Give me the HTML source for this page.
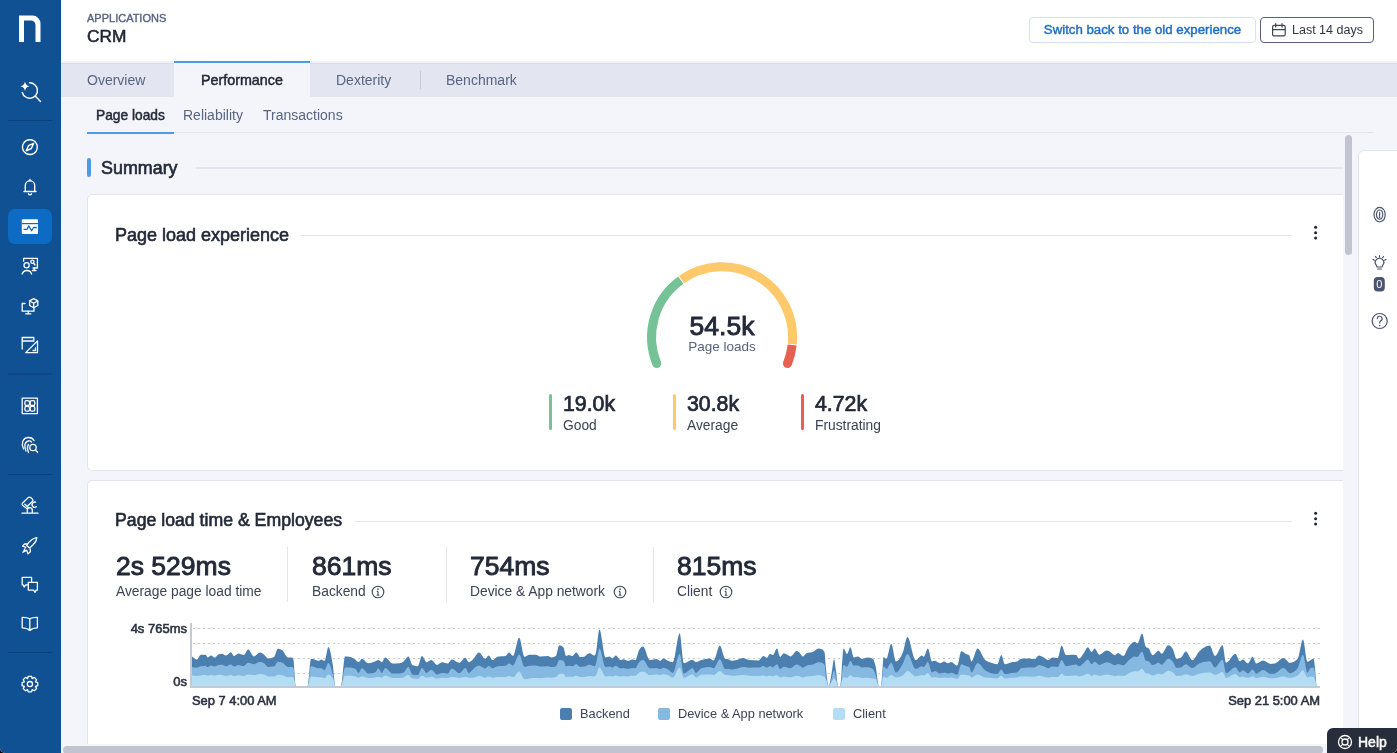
<!DOCTYPE html>
<html><head><meta charset="utf-8">
<style>
*{box-sizing:border-box;margin:0;padding:0}
html,body{width:1397px;height:753px;overflow:hidden;background:#000;font-family:"Liberation Sans",sans-serif;color:#222938}
.abs{position:absolute;white-space:nowrap}
#side{position:absolute;left:0;top:0;width:61px;height:753px;background:#105194}
#hdr{position:absolute;left:61px;top:0;width:1336px;height:62px;background:#fff}
#tabs{position:absolute;left:61px;top:63px;width:1336px;height:34px;background:#e3e6f0;box-shadow:0 -2px 0 #f1f2f7;border-top:1px solid #d9dce8}
.tab{position:absolute;top:-1px;height:34px;line-height:35px;font-size:14px;color:#586482}
.card{position:absolute;background:#fff;border:1px solid #e1e3ee;border-radius:5px}
.ttl{position:absolute;font-size:18px;font-weight:normal;-webkit-text-stroke:0.034em currentColor;color:#222938;white-space:nowrap}
.hline{position:absolute;height:1px;background:#e3e5ef}
.big{position:absolute;font-size:26.5px;font-weight:normal;-webkit-text-stroke:0.034em currentColor;color:#222938;white-space:nowrap}
.lbl{position:absolute;font-size:13.8px;color:#3a4357;white-space:nowrap;margin-top:1px}
.vdiv{position:absolute;width:1px;background:#e3e5ef}
</style></head><body><div style="position:absolute;left:0;top:0;width:1397px;height:753px;will-change:transform;background:#f4f5fa;border-radius:0 0 5px 5px;overflow:hidden">
<div id="side">
<svg width="61" height="753" viewBox="0 0 61 753" style="position:absolute;left:0;top:0">
 <path fill="#fff" d="M19,42 V15.6 H32.5 A8,8 0 0 1 40.5,23.6 V42 H35.5 V25 A4.6,4.6 0 0 0 30.9,20.4 H24 V42 Z"/>
 <g fill="none" stroke="#fff" stroke-width="1.4" stroke-linecap="round">
  <path d="M29.5,82.8 A7.7,7.7 0 1 1 22.3,92.5"/>
  <path d="M35.6,96.4 L40.5,101.5"/>
 </g>
 <path fill="#fff" d="M25,81.5 Q25.6,85.7 29.6,86.3 Q25.6,86.9 25,91.1 Q24.4,86.9 20.4,86.3 Q24.4,85.7 25,81.5 Z"/>
 <rect x="8" y="120" width="44" height="1" fill="#0c3f78"/>
 <g fill="none" stroke="#fff" stroke-width="1.4" stroke-linecap="round" stroke-linejoin="round">
  <circle cx="29.9" cy="147.1" r="7.4" stroke-dasharray="3.2 0.7"/>
  <path d="M26.2,150.8 L28.5,145.7 L33.6,143.4 L31.3,148.5 Z"/>
  <path d="M24,191.5 H36 M25.3,191.5 V185.5 A4.6,4.6 0 0 1 34.7,185.5 V191.5 M30,179.5 V180.7 M28.5,193.8 A1.6,1.6 0 0 0 31.5,193.8"/>
 </g>
 <rect x="8" y="209" width="44" height="35" rx="7" fill="#0d6bc4"/>
 <rect x="21.8" y="219.3" width="16.2" height="14.8" rx="1" fill="#fff"/>
 <rect x="21.8" y="223" width="16.2" height="1.2" fill="#0d6bc4"/>
 <path d="M23.5,229.4 L27,229.4 L28.8,225.9 L31.5,230.7 L33.6,227.5 L36.8,227.5" fill="none" stroke="#0d6bc4" stroke-width="1.3" stroke-linejoin="round"/>
 <g fill="none" stroke="#fff" stroke-width="1.3" stroke-linecap="round" stroke-linejoin="round">
  <path d="M23.6,261 V258.3 H37.4 V268 H33"/>
  <circle cx="26.6" cy="265.2" r="2.6"/>
  <path d="M22.2,274 A4.9,4.9 0 0 1 31.6,274"/>
  <circle cx="32.4" cy="261.8" r="1.6"/>
  <path d="M33.5,263 L35,265"/>
  <path d="M32.5,270.5 H36 M34.2,268 V270.5"/>
  <path d="M25,303.5 H22.2 V311.2 H34 V308.5"/>
  <path d="M28.2,311.4 V313.6 M25.6,313.8 H30.8"/>
  <path d="M33.7,298.6 L37.8,300.9 V305.5 L33.7,307.8 L29.6,305.5 V300.9 Z"/>
  <path d="M29.8,301 L33.7,303.2 L37.6,301 M33.7,303.2 V307.6"/>
  <path d="M22.2,349 V337.5 H33.8 V340.5 M22.2,341 H33.8"/>
  <path d="M37.5,340.9 V352.6 H25.7 Z"/>
  <path d="M33,350.5 H35.5 V348"/>
 </g>
 <rect x="8" y="373.5" width="44" height="1" fill="#0c3f78"/>
 <g fill="none" stroke="#fff" stroke-width="1.3" stroke-linecap="round" stroke-linejoin="round">
  <rect x="22.2" y="398.2" width="15.2" height="15.4"/>
  <rect x="24.9" y="400.7" width="4.6" height="4.8" rx="1.6"/>
  <rect x="30.2" y="400.7" width="4.6" height="4.8" rx="1.6"/>
  <rect x="24.9" y="406.3" width="4.6" height="4.8" rx="1.6"/>
  <rect x="30.2" y="406.3" width="4.6" height="4.8" rx="1.6"/>
  <path d="M23.5,449 C21,444 22.5,438 28,437.5 C31,437.3 33,438.5 34,440.5"/>
  <path d="M26,451 C24,447 24.5,442 28,441 C30,440.6 31,441.2 31.5,442"/>
  <path d="M28.5,452.5 C27.5,450 27,446.5 28.5,444.5"/>
  <circle cx="33" cy="447.5" r="3.2"/>
  <path d="M35.4,449.9 L37.6,452.2"/>
 </g>
 <rect x="8" y="474" width="44" height="1" fill="#0c3f78"/>
 <g fill="none" stroke="#fff" stroke-width="1.3" stroke-linecap="round" stroke-linejoin="round">
  <path d="M22,513.2 H38 M27.3,513 V510.2 A2.5,2.5 0 0 1 32.3,510.2 V513"/>
  <path d="M26.8,508.6 L22.4,505.2 Q21.6,504.2 22.6,503 L28.2,497.6 Q29.6,496.6 31,497.8 L32.6,499.4 Q33.4,500.6 32.4,501.6 L27.6,506 M24.8,504.2 L28.9,508"/>
  <path d="M35.6,502.2 A2.6,2.6 0 1 0 36.4,506.6"/>
  <path d="M36.8,537.6 C33.2,537.9 30.3,540.2 26.6,545.2 L29.4,548 C34.4,544.3 36.5,541.4 36.8,537.6 Z"/>
  <path d="M27.6,544 L24.6,543.8 L22.6,546.2 L25.9,547.4 M30.2,548.8 L30.4,551.8 L28,553.8 L26.8,550.5 M25,548.8 L22.9,552.3 L26.5,550.4"/>
  <path d="M31.6,581.4 V577.4 H22.2 V584.9 H23.4 L24.1,587 L25.8,584.9 H28.3"/>
  <path d="M28.3,582.3 H37.4 V590.1 H36.2 L35.1,592.3 L33.5,590.1 H28.3 Z"/>
  <path d="M29.8,618.8 C27.6,617.5 24.8,617.2 22.2,617.3 V627.8 C24.8,627.8 27.6,628.4 29.8,630.4 C32,628.4 34.8,627.8 37.4,627.8 V617.3 C34.8,617.2 32,617.5 29.8,618.8 Z M29.8,618.8 V630.2"/>
 </g>
 <rect x="8" y="652" width="44" height="1" fill="#0c3f78"/>
 <g fill="none" stroke="#fff" stroke-width="1.3" stroke-linejoin="round">
  <path d="M28.3,676.3 H31.5 L32.2,678.6 L34.3,677.4 L36.6,679.7 L35.4,681.8 L37.7,682.5 V685.7 L35.4,686.4 L36.6,688.5 L34.3,690.8 L32.2,689.6 L31.5,691.9 H28.3 L27.6,689.6 L25.5,690.8 L23.2,688.5 L24.4,686.4 L22.1,685.7 V682.5 L24.4,681.8 L23.2,679.7 L25.5,677.4 L27.6,678.6 Z"/>
  <circle cx="29.9" cy="684.1" r="2.6"/>
 </g>
</svg>
</div>
<div id="hdr">
  <div class="abs" style="left:26px;top:12px;font-size:11px;font-weight:normal;-webkit-text-stroke:0.034em currentColor;color:#56627f">APPLICATIONS</div>
  <div class="abs" style="left:26px;top:26px;font-size:17.3px;font-weight:normal;-webkit-text-stroke:0.034em currentColor;color:#1f2533">CRM</div>
  <div class="abs" style="left:968px;top:17px;width:227px;height:26px;border:1px solid #d3e3f6;border-radius:4px;font-size:13.25px;font-weight:normal;-webkit-text-stroke:0.034em currentColor;color:#1f6fc5;line-height:24px;text-align:center">Switch back to the old experience</div>
  <div class="abs" style="left:1199px;top:17px;width:114px;height:26px;border:1px solid #56627f;border-radius:4px;font-size:12.5px;color:#2c3345;line-height:24px;padding-left:31px">Last 14 days
   <svg width="16" height="16" viewBox="0 0 16 16" style="position:absolute;left:10px;top:3.5px"><g fill="none" stroke="#3a4357" stroke-width="1.2"><rect x="1.6" y="3.4" width="12.6" height="10.5" rx="1.5"/><path d="M1.6,7.6 H14.2 M4.7,1.3 V5.6 M11.1,1.3 V5.6"/></g></svg>
  </div>
</div>
<div id="tabs">
  <div class="tab" style="left:26px">Overview</div>
  <div class="abs" style="left:113px;top:-3px;width:136px;height:37px;background:#f4f5fa;border-top:2px solid #4a9be8"></div>
  <div class="tab" style="left:140px;font-weight:normal;-webkit-text-stroke:0.034em currentColor;font-size:14.3px;color:#222938">Performance</div>
  <div class="tab" style="left:275px">Dexterity</div>
  <div class="abs" style="left:359px;top:7px;width:1px;height:18px;background:#c5cad8"></div>
  <div class="tab" style="left:385px">Benchmark</div>
</div>
<!-- subtabs -->
<div class="abs" style="left:96px;top:108px;font-size:13.75px;font-weight:normal;-webkit-text-stroke:0.034em currentColor;color:#222938">Page loads</div>
<div class="abs" style="left:183px;top:107px;font-size:14px;color:#586482">Reliability</div>
<div class="abs" style="left:263px;top:107px;font-size:14px;color:#586482">Transactions</div>
<div class="hline" style="left:87px;top:132px;width:1286px"></div>
<div class="abs" style="left:87px;top:132px;width:87px;height:2px;background:#4a9be8"></div>

<div id="scroll" style="position:absolute;left:62px;top:134px;width:1281px;height:610px;overflow:hidden">
 <div style="position:absolute;left:-62px;top:-134px;width:1397px;height:900px">
  <!-- summary -->
  <div class="abs" style="left:87px;top:158px;width:4px;height:19px;background:#4a9be8;border-radius:2px"></div>
  <div class="abs" style="left:101px;top:158px;font-size:17.9px;font-weight:normal;-webkit-text-stroke:0.034em currentColor;color:#222938">Summary</div>
  <div class="abs" style="left:196px;top:167px;width:1150px;height:2px;background:#e3e5ef"></div>

  <!-- card1 -->
  <div class="card" style="left:87px;top:194px;width:1270px;height:277px"></div>
  <div class="ttl" style="left:115px;top:225px">Page load experience</div>
  <div class="hline" style="left:301px;top:235px;width:991px"></div>
  <svg class="abs" style="left:1312px;top:225px" width="8" height="16"><g fill="#1f2533"><circle cx="3.6" cy="2.2" r="1.5"/><circle cx="3.6" cy="7.7" r="1.5"/><circle cx="3.6" cy="13" r="1.5"/></g></svg>
  <!-- gauge -->
  <svg class="abs" style="left:600px;top:240px" width="250" height="150" viewBox="600 240 250 150">
   <g fill="none" stroke-width="9" stroke-linecap="butt">
    <path stroke="#74c296" d="M656.73,363.61 A70.5,70.5 0 0 1 680.76,280.09"/>
<path stroke="#fdc96a" d="M681.56,279.52 A70.5,70.5 0 0 1 792.26,344.08"/>
<path stroke="#e8604f" d="M792.16,345.06 A70.5,70.5 0 0 1 787.47,363.61"/>
<circle cx="656.73" cy="363.61" r="4.5" fill="#74c296" stroke="none"/>
<circle cx="787.47" cy="363.61" r="4.5" fill="#e8604f" stroke="none"/>
   </g>
  </svg>
  <div class="abs" style="left:622px;top:311px;width:200px;text-align:center;font-size:26.5px;font-weight:normal;-webkit-text-stroke:0.034em currentColor;color:#222938">54.5k</div>
  <div class="abs" style="left:622px;top:339px;width:200px;text-align:center;font-size:13.5px;color:#56627f">Page loads</div>
  <div class="abs" style="left:549px;top:394px;width:3px;height:36px;background:#74c296;border-radius:2px"></div>
  <div class="abs" style="left:673px;top:394px;width:3px;height:36px;background:#fdc96a;border-radius:2px"></div>
  <div class="abs" style="left:801px;top:394px;width:3px;height:36px;background:#e8604f;border-radius:2px"></div>
  <div class="big" style="left:563px;top:392px;font-size:21.3px">19.0k</div>
  <div class="lbl" style="left:563px;top:417px">Good</div>
  <div class="big" style="left:687px;top:392px;font-size:21.3px">30.8k</div>
  <div class="lbl" style="left:687px;top:417px">Average</div>
  <div class="big" style="left:815px;top:392px;font-size:21.3px">4.72k</div>
  <div class="lbl" style="left:815px;top:417px">Frustrating</div>

  <!-- card2 -->
  <div class="card" style="left:87px;top:480px;width:1270px;height:320px"></div>
  <div class="ttl" style="left:115px;top:510px;font-size:17.7px">Page load time &amp; Employees</div>
  <div class="hline" style="left:355px;top:521px;width:937px"></div>
  <svg class="abs" style="left:1312px;top:511px" width="8" height="16"><g fill="#1f2533"><circle cx="3.6" cy="2.2" r="1.5"/><circle cx="3.6" cy="7.7" r="1.5"/><circle cx="3.6" cy="13" r="1.5"/></g></svg>
  <div class="big" style="left:116px;top:551px">2s 529ms</div>
  <div class="lbl" style="left:116px;top:583px">Average page load time</div>
  <div class="vdiv" style="left:287px;top:547px;height:55px"></div>
  <div class="big" style="left:312px;top:551px">861ms</div>
  <div class="lbl" style="left:312px;top:583px">Backend</div>
  <div class="vdiv" style="left:446px;top:547px;height:55px"></div>
  <div class="big" style="left:470px;top:551px">754ms</div>
  <div class="lbl" style="left:470px;top:583px">Device &amp; App network</div>
  <div class="vdiv" style="left:653px;top:547px;height:55px"></div>
  <div class="big" style="left:677px;top:551px">815ms</div>
  <div class="lbl" style="left:677px;top:583px">Client</div>
  <svg class="abs" style="left:370.7px;top:585px" width="14" height="14" viewBox="0 0 14 14"><g fill="none" stroke="#3a4357" stroke-width="1.1"><circle cx="7" cy="7" r="5.8"/><path d="M7,6.4 V10 M5.7,10.2 H8.4 M5.8,6.4 H7"/></g><circle cx="7" cy="4.1" r="0.85" fill="#3a4357"/></svg>
<svg class="abs" style="left:612.7px;top:585px" width="14" height="14" viewBox="0 0 14 14"><g fill="none" stroke="#3a4357" stroke-width="1.1"><circle cx="7" cy="7" r="5.8"/><path d="M7,6.4 V10 M5.7,10.2 H8.4 M5.8,6.4 H7"/></g><circle cx="7" cy="4.1" r="0.85" fill="#3a4357"/></svg>
<svg class="abs" style="left:718.7px;top:585px" width="14" height="14" viewBox="0 0 14 14"><g fill="none" stroke="#3a4357" stroke-width="1.1"><circle cx="7" cy="7" r="5.8"/><path d="M7,6.4 V10 M5.7,10.2 H8.4 M5.8,6.4 H7"/></g><circle cx="7" cy="4.1" r="0.85" fill="#3a4357"/></svg>

  <!-- chart -->
  <svg class="abs" style="left:0;top:600px" width="1397" height="130" viewBox="0 600 1397 130">
   <g stroke="#c9cdd9" stroke-width="1" stroke-dasharray="2 3">
    <path d="M193,628.5 H1320 M193,643.5 H1320 M193,658.5 H1320 M193,673.5 H1320"/>
   </g>
   <path fill="#4b7fb0" d="M192.0,686.0 L192.0,656.4 C193.6,657.9 195.2,659.4 196.8,659.4 C198.2,659.4 199.5,654.7 200.9,654.7 C202.5,654.7 204.0,654.7 205.6,654.7 C206.3,654.7 207.0,657.4 207.7,657.4 C208.8,657.4 210.0,655.6 211.1,655.6 C212.2,655.6 213.4,657.8 214.5,657.8 C215.9,657.8 217.2,654.8 218.6,654.3 C219.7,653.9 220.9,653.7 222.0,653.7 C223.3,653.7 224.7,655.6 226.0,655.6 C227.6,655.6 229.2,652.2 230.8,652.2 C231.9,652.2 233.1,656.0 234.2,656.0 C235.6,656.0 236.9,653.6 238.3,653.6 C240.1,653.6 241.9,655.1 243.7,655.1 C245.2,655.1 246.7,649.6 248.2,649.6 C250.1,649.6 252.0,656.4 253.9,656.4 C255.9,656.4 258.0,652.6 260.0,652.6 C261.4,652.6 262.7,653.7 264.1,654.7 C265.5,655.7 266.8,658.5 268.2,658.5 C270.2,658.5 272.3,657.9 274.3,656.7 C275.4,656.0 276.6,648.8 277.7,648.8 C279.3,648.8 280.9,649.4 282.5,650.6 C284.3,652.0 286.1,657.4 287.9,657.4 C289.3,657.4 290.6,657.4 292.0,657.4 C292.5,657.4 292.9,658.1 293.4,659.4 C294.2,661.7 295.0,686.0 295.8,686.0 C299.7,686.0 303.7,686.0 307.6,686.0 C308.7,686.0 309.9,658.8 311.0,658.8 C312.4,658.8 313.7,659.3 315.1,659.7 C316.2,660.0 317.4,660.8 318.5,660.8 C319.4,660.8 320.3,659.4 321.2,659.4 C322.3,659.4 323.5,660.8 324.6,660.8 C325.9,660.8 327.1,646.9 328.4,646.9 C329.9,646.9 331.3,655.5 332.8,664.9 C333.7,670.7 334.6,686.0 335.5,686.0 C337.3,686.0 339.2,686.0 341.0,686.0 C342.3,686.0 343.7,656.4 345.0,656.4 C346.4,656.4 347.7,656.5 349.1,656.7 C351.1,657.0 353.2,658.0 355.2,659.4 C356.3,660.2 357.5,662.2 358.6,662.2 C359.7,662.2 360.9,658.8 362.0,658.8 C364.1,658.8 366.1,663.2 368.2,663.2 C370.5,663.2 372.7,662.3 375.0,661.5 C376.1,661.1 377.3,660.1 378.4,660.1 C379.5,660.1 380.7,662.2 381.8,662.2 C382.9,662.2 384.1,657.4 385.2,657.4 C387.7,657.4 390.2,663.5 392.7,663.5 C395.0,663.5 397.2,663.4 399.5,663.2 C400.9,663.1 402.2,662.5 403.6,661.5 C405.2,660.4 406.7,656.4 408.3,656.4 C409.7,656.4 411.0,664.2 412.4,664.9 C414.2,665.8 416.0,666.2 417.8,666.2 C419.2,666.2 420.5,656.0 421.9,656.0 C423.5,656.0 425.1,662.2 426.7,662.2 C428.3,662.2 429.8,660.1 431.4,660.1 C433.2,660.1 435.1,664.9 436.9,664.9 C438.7,664.9 440.5,662.2 442.3,662.2 C444.1,662.2 446.0,663.5 447.8,663.5 C449.1,663.5 450.5,659.4 451.8,659.4 C454.3,659.4 456.8,662.8 459.3,662.8 C461.3,662.8 463.4,657.8 465.4,657.8 C466.5,657.8 467.7,662.2 468.8,662.2 C470.2,662.2 471.5,660.6 472.9,659.4 C474.9,657.6 477.0,652.4 479.0,652.4 C481.1,652.4 483.1,658.8 485.2,658.8 C486.3,658.8 487.5,655.4 488.6,655.4 C489.9,655.4 491.3,660.1 492.6,660.1 C494.2,660.1 495.8,657.0 497.4,656.7 C500.1,656.2 502.9,656.5 505.6,656.0 C506.7,655.8 507.9,652.6 509.0,652.6 C510.3,652.6 511.7,656.0 513.0,656.0 C515.1,656.0 517.1,637.7 519.2,637.7 C521.0,637.7 522.8,656.7 524.6,656.7 C526.2,656.7 527.8,654.7 529.4,654.7 C531.4,654.7 533.5,654.7 535.5,654.7 C537.1,654.7 538.6,656.4 540.2,656.4 C542.7,656.4 545.2,656.0 547.7,656.0 C549.1,656.0 550.4,657.4 551.8,657.4 C553.2,657.4 554.5,656.9 555.9,656.0 C557.0,655.2 558.2,645.2 559.3,645.2 C560.7,645.2 562.0,645.9 563.4,647.2 C564.3,648.1 565.2,656.0 566.1,656.0 C567.0,656.0 567.9,655.1 568.8,655.1 C569.9,655.1 571.1,656.0 572.2,656.0 C573.6,656.0 574.9,652.4 576.3,652.4 C577.7,652.4 579.0,657.0 580.4,657.0 C581.8,657.0 583.1,656.8 584.5,656.4 C586.1,655.9 587.6,653.3 589.2,653.3 C591.0,653.3 592.9,655.6 594.7,655.6 C595.1,655.6 595.6,654.1 596.0,652.6 C597.1,648.6 598.3,629.5 599.4,629.5 C601.5,629.5 603.5,657.4 605.6,657.4 C606.9,657.4 608.3,656.4 609.6,656.4 C610.5,656.4 611.5,658.4 612.4,658.4 C613.5,658.4 614.7,655.6 615.8,655.6 C617.4,655.6 618.9,660.1 620.5,660.1 C621.4,660.1 622.3,659.2 623.2,659.2 C624.8,659.2 626.4,660.8 628.0,660.8 C629.4,660.8 630.7,659.4 632.1,659.4 C633.2,659.4 634.4,660.1 635.5,660.1 C636.6,660.1 637.8,652.8 638.9,650.6 C640.3,647.9 641.6,646.5 643.0,646.5 C645.3,646.5 647.5,660.1 649.8,660.1 C652.1,660.1 654.3,659.0 656.6,659.0 C657.7,659.0 658.9,660.8 660.0,660.8 C661.1,660.8 662.3,658.4 663.4,658.4 C664.7,658.4 666.1,659.9 667.4,660.5 C669.2,661.3 671.1,662.2 672.9,662.2 C675.2,662.2 677.4,633.6 679.7,633.6 C681.1,633.6 682.4,663.2 683.8,663.2 C686.7,663.2 689.7,659.7 692.6,659.7 C693.7,659.7 694.9,662.2 696.0,662.2 C697.8,662.2 699.6,660.7 701.4,660.1 C704.1,659.2 706.9,658.4 709.6,658.4 C711.0,658.4 712.3,660.5 713.7,660.5 C715.7,660.5 717.8,645.6 719.8,645.6 C721.6,645.6 723.4,658.2 725.2,658.8 C726.3,659.2 727.5,659.1 728.6,659.4 C729.7,659.7 730.9,660.8 732.0,660.8 C733.6,660.8 735.2,660.5 736.8,660.1 C738.8,659.6 740.9,658.1 742.9,658.1 C745.0,658.1 747.0,659.9 749.1,660.1 C752.3,660.4 755.4,660.5 758.6,660.5 C760.2,660.5 761.8,656.0 763.4,656.0 C764.5,656.0 765.7,657.8 766.8,657.8 C767.9,657.8 769.1,653.7 770.2,653.7 C771.1,653.7 772.0,655.1 772.9,655.1 C774.3,655.1 775.6,648.6 777.0,648.6 C778.0,648.6 779.1,657.0 780.1,657.0 C781.3,657.0 782.6,653.3 783.8,653.3 C786.1,653.3 788.3,656.4 790.6,656.4 C792.6,656.4 794.7,651.0 796.7,651.0 C797.6,651.0 798.5,651.7 799.4,652.4 C800.5,653.3 801.7,656.4 802.8,656.4 C804.2,656.4 805.5,653.4 806.9,653.0 C808.9,652.3 811.0,652.7 813.0,652.0 C814.8,651.4 816.6,648.6 818.4,648.6 C819.5,648.6 820.7,648.8 821.8,649.2 C822.7,649.5 823.7,650.3 824.6,652.6 C825.0,653.7 825.5,663.3 825.9,667.6 C826.8,676.6 827.7,686.0 828.6,686.0 C829.5,686.0 830.5,679.0 831.4,674.4 C832.3,670.0 833.2,659.2 834.1,659.2 C834.8,659.2 835.4,667.4 836.1,671.7 C836.8,676.3 837.5,686.0 838.2,686.0 C838.9,686.0 839.5,686.0 840.2,686.0 C841.3,686.0 842.5,648.6 843.6,648.6 C844.7,648.6 845.9,654.0 847.0,654.0 C848.1,654.0 849.3,647.2 850.4,647.2 C851.5,647.2 852.7,657.4 853.8,657.4 C855.2,657.4 856.5,656.4 857.9,656.4 C859.3,656.4 860.6,658.8 862.0,658.8 C863.8,658.8 865.6,657.4 867.4,657.4 C869.2,657.4 871.0,657.9 872.8,658.8 C873.7,659.3 874.7,662.4 875.6,666.2 C876.7,670.8 877.9,686.0 879.0,686.0 C879.7,686.0 880.3,686.0 881.0,686.0 C881.9,686.0 882.8,657.0 883.7,657.0 C884.6,657.0 885.5,658.8 886.4,658.8 C888.0,658.8 889.6,643.8 891.2,643.8 C892.8,643.8 894.4,661.5 896.0,661.5 C898.3,661.5 900.5,658.3 902.8,652.6 C904.4,648.7 905.9,637.0 907.5,637.0 C910.2,637.0 913.0,660.1 915.7,660.1 C917.7,660.1 919.8,655.4 921.8,655.4 C922.5,655.4 923.1,656.7 923.8,656.7 C925.2,656.7 926.5,648.6 927.9,648.6 C929.3,648.6 930.6,661.5 932.0,661.5 C932.9,661.5 933.9,660.8 934.8,660.8 C936.6,660.8 938.4,663.2 940.2,663.2 C941.6,663.2 942.9,661.5 944.3,661.5 C945.4,661.5 946.6,663.2 947.7,663.2 C948.8,663.2 950.0,661.9 951.1,661.9 C953.1,661.9 955.2,665.6 957.2,665.6 C958.6,665.6 959.9,651.3 961.3,651.3 C962.9,651.3 964.4,653.2 966.0,654.0 C967.1,654.6 968.3,654.5 969.4,655.6 C970.1,656.3 970.8,661.5 971.5,661.5 C973.5,661.5 975.6,648.6 977.6,648.6 C980.1,648.6 982.6,657.9 985.1,660.1 C987.1,661.9 989.2,662.1 991.2,662.8 C993.2,663.5 995.3,664.2 997.3,664.2 C998.7,664.2 1000.0,655.1 1001.4,655.1 C1002.5,655.1 1003.7,664.2 1004.8,664.2 C1007.1,664.2 1009.3,662.7 1011.6,662.2 C1013.4,661.8 1015.2,662.0 1017.0,661.5 C1018.4,661.1 1019.7,658.9 1021.1,658.8 C1023.4,658.6 1025.6,658.5 1027.9,658.5 C1030.2,658.5 1032.4,659.2 1034.7,659.2 C1036.1,659.2 1037.4,655.6 1038.8,655.6 C1040.2,655.6 1041.5,656.4 1042.9,657.0 C1044.7,657.8 1046.5,660.1 1048.3,660.1 C1049.7,660.1 1051.0,657.4 1052.4,657.4 C1054.2,657.4 1056.0,658.1 1057.8,658.1 C1059.1,658.1 1060.3,645.6 1061.6,645.6 C1063.1,645.6 1064.5,655.1 1066.0,655.1 C1067.8,655.1 1069.6,654.7 1071.4,654.7 C1073.0,654.7 1074.6,654.8 1076.2,655.1 C1077.1,655.2 1078.0,658.8 1078.9,658.8 C1080.5,658.8 1082.1,655.4 1083.7,653.3 C1085.1,651.5 1086.4,647.2 1087.8,647.2 C1089.1,647.2 1090.5,652.0 1091.8,652.0 C1092.7,652.0 1093.7,648.6 1094.6,648.6 C1096.2,648.6 1097.7,654.7 1099.3,654.7 C1101.8,654.7 1104.3,650.6 1106.8,650.6 C1108.2,650.6 1109.5,651.6 1110.9,652.4 C1112.3,653.2 1113.6,655.3 1115.0,655.3 C1116.0,655.3 1117.0,653.1 1118.0,653.1 C1119.8,653.1 1121.5,656.1 1123.3,656.1 C1125.0,656.1 1126.8,649.4 1128.5,647.1 C1130.5,644.4 1132.5,641.8 1134.5,641.8 C1135.5,641.8 1136.5,643.3 1137.5,643.3 C1139.0,643.3 1140.6,633.5 1142.1,633.5 C1143.3,633.5 1144.6,645.3 1145.8,646.8 C1146.8,648.0 1147.8,647.5 1148.8,648.6 C1150.1,650.0 1151.3,655.3 1152.6,655.3 C1154.6,655.3 1156.6,650.8 1158.6,650.8 C1159.6,650.8 1160.6,653.8 1161.6,653.8 C1163.9,653.8 1166.1,645.3 1168.4,645.3 C1169.9,645.3 1171.4,646.6 1172.9,649.3 C1174.1,651.5 1175.4,658.8 1176.6,658.8 C1178.1,658.8 1179.6,658.4 1181.1,657.6 C1182.6,656.8 1184.2,651.6 1185.7,651.6 C1187.9,651.6 1190.2,660.3 1192.4,660.3 C1194.7,660.3 1196.9,653.9 1199.2,651.6 C1202.7,648.1 1206.2,645.6 1209.7,645.6 C1211.5,645.6 1213.2,656.1 1215.0,656.1 C1217.5,656.1 1220.0,645.3 1222.5,645.3 C1223.7,645.3 1225.0,662.8 1226.2,662.8 C1229.2,662.8 1232.3,653.8 1235.3,653.8 C1236.8,653.8 1238.3,661.3 1239.8,661.3 C1240.8,661.3 1241.8,659.4 1242.8,659.4 C1244.5,659.4 1246.3,663.3 1248.0,663.3 C1249.5,663.3 1251.1,656.8 1252.6,656.8 C1253.8,656.8 1255.1,663.6 1256.3,663.6 C1258.6,663.6 1260.8,660.6 1263.1,660.6 C1265.6,660.6 1268.1,663.9 1270.6,663.9 C1271.9,663.9 1273.1,663.8 1274.4,663.6 C1277.4,663.1 1280.4,657.9 1283.4,657.9 C1285.6,657.9 1287.9,662.8 1290.1,662.8 C1292.6,662.8 1295.2,661.5 1297.7,658.8 C1299.4,657.0 1301.2,639.5 1302.9,639.5 C1304.4,639.5 1305.9,661.8 1307.4,661.8 C1308.4,661.8 1309.4,660.8 1310.4,660.3 C1311.4,659.8 1312.4,658.8 1313.4,658.8 C1314.4,658.8 1315.4,672.4 1316.4,686.0 L1316.4,686.0 Z"/>
<path fill="#86b9e2" d="M192.0,686.0 L192.0,666.9 C193.6,667.2 195.2,667.6 196.8,667.6 C198.2,667.6 199.5,666.5 200.9,666.2 C202.5,665.9 204.0,665.7 205.6,665.7 C206.3,665.7 207.0,667.1 207.7,667.1 C208.8,667.1 210.0,665.6 211.1,665.6 C212.2,665.6 213.4,666.5 214.5,666.5 C215.9,666.5 217.2,664.9 218.6,664.9 C219.7,664.8 220.9,664.8 222.0,664.8 C223.3,664.8 224.7,666.3 226.0,666.3 C227.6,666.3 229.2,664.6 230.8,664.6 C231.9,664.6 233.1,666.6 234.2,666.6 C235.6,666.6 236.9,664.9 238.3,664.9 C240.1,664.9 241.9,666.0 243.7,666.0 C245.2,666.0 246.7,662.8 248.2,662.8 C250.1,662.8 252.0,664.2 253.9,664.2 C255.9,664.2 258.0,662.0 260.0,662.0 C261.4,662.0 262.7,662.4 264.1,663.2 C265.5,664.1 266.8,666.9 268.2,666.9 C270.2,666.9 272.3,666.7 274.3,666.3 C275.4,666.0 276.6,661.7 277.7,661.7 C279.3,661.7 280.9,662.1 282.5,662.8 C284.3,663.7 286.1,666.9 287.9,666.9 C289.3,666.9 290.6,666.9 292.0,666.9 C292.5,666.9 292.9,667.3 293.4,668.0 C294.2,669.3 295.0,686.0 295.8,686.0 C299.7,686.0 303.7,686.0 307.6,686.0 C308.7,686.0 309.9,666.2 311.0,666.2 C312.4,666.2 313.7,666.9 315.1,667.2 C316.2,667.6 317.4,668.3 318.5,668.3 C319.4,668.3 320.3,668.3 321.2,668.3 C322.3,668.3 323.5,670.2 324.6,670.2 C325.9,670.2 327.1,663.1 328.4,663.1 C329.9,663.1 331.3,669.1 332.8,674.4 C333.7,677.7 334.6,686.0 335.5,686.0 C337.3,686.0 339.2,686.0 341.0,686.0 C342.3,686.0 343.7,667.6 345.0,667.6 C346.4,667.6 347.7,667.6 349.1,667.6 C351.1,667.6 353.2,668.0 355.2,668.8 C356.3,669.3 357.5,672.9 358.6,672.9 C359.7,672.9 360.9,668.2 362.0,668.2 C364.1,668.2 366.1,673.5 368.2,673.5 C370.5,673.5 372.7,673.1 375.0,672.5 C376.1,672.2 377.3,668.4 378.4,668.4 C379.5,668.4 380.7,672.9 381.8,672.9 C382.9,672.9 384.1,667.9 385.2,667.9 C387.7,667.9 390.2,673.6 392.7,673.6 C395.0,673.6 397.2,673.6 399.5,673.5 C400.9,673.4 402.2,673.1 403.6,672.5 C405.2,671.8 406.7,666.9 408.3,666.9 C409.7,666.9 411.0,674.0 412.4,674.4 C414.2,674.9 416.0,675.1 417.8,675.1 C419.2,675.1 420.5,667.9 421.9,667.9 C423.5,667.9 425.1,672.9 426.7,672.9 C428.3,672.9 429.8,669.8 431.4,669.8 C433.2,669.8 435.1,674.4 436.9,674.4 C438.7,674.4 440.5,672.9 442.3,672.9 C444.1,672.9 446.0,673.6 447.8,673.6 C449.1,673.6 450.5,668.5 451.8,668.5 C454.3,668.5 456.8,673.2 459.3,673.2 C461.3,673.2 463.4,667.9 465.4,667.9 C466.5,667.9 467.7,672.9 468.8,672.9 C470.2,672.9 471.5,670.4 472.9,669.4 C474.9,667.8 477.0,665.5 479.0,665.5 C481.1,665.5 483.1,668.5 485.2,668.5 C486.3,668.5 487.5,666.0 488.6,666.0 C489.9,666.0 491.3,668.3 492.6,668.3 C494.2,668.3 495.8,666.4 497.4,666.2 C500.1,665.9 502.9,666.0 505.6,665.7 C506.7,665.6 507.9,663.6 509.0,663.6 C510.3,663.6 511.7,665.6 513.0,665.6 C515.1,665.6 517.1,654.6 519.2,654.6 C521.0,654.6 522.8,666.9 524.6,666.9 C526.2,666.9 527.8,665.7 529.4,665.7 C531.4,665.6 533.5,665.6 535.5,665.6 C537.1,665.6 538.6,666.6 540.2,666.6 C542.7,666.6 545.2,666.3 547.7,666.3 C549.1,666.3 550.4,667.1 551.8,667.1 C553.2,667.1 554.5,666.8 555.9,666.2 C557.0,665.8 558.2,660.1 559.3,660.1 C560.7,660.1 562.0,660.3 563.4,660.7 C564.3,660.9 565.2,666.2 566.1,666.2 C567.0,666.2 567.9,665.7 568.8,665.7 C569.9,665.7 571.1,666.3 572.2,666.3 C573.6,666.3 574.9,664.2 576.3,664.2 C577.7,664.2 579.0,667.0 580.4,667.0 C581.8,667.0 583.1,666.9 584.5,666.6 C586.1,666.4 587.6,664.8 589.2,664.8 C591.0,664.8 592.9,666.2 594.7,666.2 C595.1,666.2 595.6,665.0 596.0,663.9 C597.1,660.9 598.3,648.5 599.4,648.5 C601.5,648.5 603.5,667.0 605.6,667.0 C606.9,667.0 608.3,666.4 609.6,666.4 C610.5,666.4 611.5,667.5 612.4,667.5 C613.5,667.5 614.7,665.8 615.8,665.8 C617.4,665.8 618.9,668.5 620.5,668.5 C621.4,668.5 622.3,667.9 623.2,667.9 C624.8,667.9 626.4,668.8 628.0,668.8 C629.4,668.8 630.7,667.9 632.1,667.9 C633.2,667.9 634.4,668.3 635.5,668.3 C636.6,668.3 637.8,663.9 638.9,662.6 C640.3,660.9 641.6,660.1 643.0,660.1 C645.3,660.1 647.5,668.3 649.8,668.3 C652.1,668.3 654.3,667.9 656.6,667.9 C657.7,667.9 658.9,669.1 660.0,669.1 C661.1,669.1 662.3,667.7 663.4,667.7 C664.7,667.7 666.1,668.5 667.4,669.1 C669.2,670.0 671.1,672.9 672.9,672.9 C675.2,672.9 677.4,653.9 679.7,653.9 C681.1,653.9 682.4,673.5 683.8,673.5 C686.7,673.5 689.7,668.2 692.6,668.2 C693.7,668.2 694.9,672.9 696.0,672.9 C697.8,672.9 699.6,668.8 701.4,668.3 C704.1,667.5 706.9,667.1 709.6,667.1 C711.0,667.1 712.3,668.3 713.7,668.3 C715.7,668.3 717.8,659.2 719.8,659.2 C721.6,659.2 723.4,668.9 725.2,668.9 C726.3,669.0 727.5,669.0 728.6,669.0 C729.7,669.1 730.9,669.6 732.0,669.6 C733.6,669.6 735.2,669.1 736.8,668.7 C738.8,668.3 740.9,667.0 742.9,667.0 C745.0,667.0 747.0,667.7 749.1,667.7 C752.3,667.7 755.4,667.6 758.6,667.6 C760.2,667.6 761.8,665.9 763.4,665.9 C764.5,665.9 765.7,667.6 766.8,667.6 C767.9,667.6 769.1,665.9 770.2,665.9 C771.1,665.9 772.0,667.2 772.9,667.2 C774.3,667.2 775.6,664.2 777.0,664.2 C778.0,664.2 779.1,669.0 780.1,669.0 C781.3,669.0 782.6,666.7 783.8,666.7 C786.1,666.7 788.3,668.2 790.6,668.2 C792.6,668.2 794.7,664.6 796.7,664.6 C797.6,664.6 798.5,665.0 799.4,665.4 C800.5,665.9 801.7,667.6 802.8,667.6 C804.2,667.6 805.5,665.8 806.9,665.4 C808.9,664.8 811.0,665.1 813.0,664.5 C814.8,663.9 816.6,662.2 818.4,662.2 C819.5,662.2 820.7,662.3 821.8,662.7 C822.7,663.0 823.7,663.4 824.6,664.9 C825.0,665.6 825.5,672.9 825.9,675.9 C826.8,682.1 827.7,686.0 828.6,686.0 C829.5,686.0 830.5,682.3 831.4,679.6 C832.3,677.0 833.2,670.3 834.1,670.3 C834.8,670.3 835.4,675.6 836.1,678.1 C836.8,680.8 837.5,686.0 838.2,686.0 C838.9,686.0 839.5,686.0 840.2,686.0 C841.3,686.0 842.5,664.9 843.6,664.9 C844.7,664.9 845.9,666.6 847.0,666.6 C848.1,666.6 849.3,661.0 850.4,661.0 C851.5,661.0 852.7,665.6 853.8,665.6 C855.2,665.6 856.5,665.5 857.9,665.5 C859.3,665.5 860.6,667.5 862.0,667.5 C863.8,667.5 865.6,667.3 867.4,667.3 C869.2,667.3 871.0,667.9 872.8,668.9 C873.7,669.4 874.7,672.6 875.6,675.1 C876.7,678.1 877.9,686.0 879.0,686.0 C879.7,686.0 880.3,686.0 881.0,686.0 C881.9,686.0 882.8,666.2 883.7,666.2 C884.6,666.2 885.5,668.9 886.4,668.9 C888.0,668.9 889.6,662.8 891.2,662.8 C892.8,662.8 894.4,672.5 896.0,672.5 C898.3,672.5 900.5,667.7 902.8,663.8 C904.4,661.0 905.9,654.0 907.5,654.0 C910.2,654.0 913.0,669.0 915.7,669.0 C917.7,669.0 919.8,666.2 921.8,666.2 C922.5,666.2 923.1,667.0 923.8,667.0 C925.2,667.0 926.5,662.1 927.9,662.1 C929.3,662.1 930.6,672.5 932.0,672.5 C932.9,672.5 933.9,670.9 934.8,670.9 C936.6,670.9 938.4,673.5 940.2,673.5 C941.6,673.5 942.9,672.5 944.3,672.5 C945.4,672.5 946.6,673.5 947.7,673.5 C948.8,673.5 950.0,672.7 951.1,672.7 C953.1,672.7 955.2,674.8 957.2,674.8 C958.6,674.8 959.9,664.2 961.3,664.2 C962.9,664.2 964.4,665.5 966.0,666.1 C967.1,666.6 968.3,666.5 969.4,667.3 C970.1,667.8 970.8,672.5 971.5,672.5 C973.5,672.5 975.6,663.0 977.6,663.0 C980.1,663.0 982.6,668.6 985.1,670.3 C987.1,671.8 989.2,672.7 991.2,673.2 C993.2,673.8 995.3,674.0 997.3,674.0 C998.7,674.0 1000.0,669.6 1001.4,669.6 C1002.5,669.6 1003.7,674.0 1004.8,674.0 C1007.1,674.0 1009.3,673.2 1011.6,672.9 C1013.4,672.7 1015.2,672.8 1017.0,672.5 C1018.4,672.3 1019.7,668.6 1021.1,668.3 C1023.4,667.8 1025.6,667.6 1027.9,667.5 C1030.2,667.4 1032.4,667.5 1034.7,667.4 C1036.1,667.3 1037.4,664.9 1038.8,664.9 C1040.2,664.9 1041.5,665.6 1042.9,666.0 C1044.7,666.6 1046.5,668.3 1048.3,668.3 C1049.7,668.3 1051.0,666.6 1052.4,666.6 C1054.2,666.6 1056.0,667.0 1057.8,667.0 C1059.1,667.0 1060.3,660.1 1061.6,660.1 C1063.1,660.1 1064.5,666.2 1066.0,666.2 C1067.8,666.2 1069.6,665.5 1071.4,665.3 C1073.0,665.0 1074.6,664.6 1076.2,664.6 C1077.1,664.6 1078.0,666.3 1078.9,666.3 C1080.5,666.3 1082.1,664.3 1083.7,663.0 C1085.1,661.9 1086.4,659.4 1087.8,659.4 C1089.1,659.4 1090.5,664.2 1091.8,664.2 C1092.7,664.2 1093.7,661.8 1094.6,661.8 C1096.2,661.8 1097.7,664.9 1099.3,664.9 C1101.8,664.9 1104.3,662.2 1106.8,662.2 C1108.2,662.2 1109.5,662.9 1110.9,663.4 C1112.3,663.9 1113.6,665.3 1115.0,665.3 C1116.0,665.3 1117.0,664.1 1118.0,664.1 C1119.8,664.1 1121.5,665.4 1123.3,665.4 C1125.0,665.4 1126.8,662.0 1128.5,660.6 C1130.5,659.0 1132.5,656.5 1134.5,656.5 C1135.5,656.5 1136.5,656.9 1137.5,656.9 C1139.0,656.9 1140.6,651.8 1142.1,651.8 C1143.3,651.8 1144.6,659.9 1145.8,660.6 C1146.8,661.1 1147.8,660.9 1148.8,661.4 C1150.1,662.1 1151.3,665.1 1152.6,665.1 C1154.6,665.1 1156.6,662.8 1158.6,662.8 C1159.6,662.8 1160.6,664.8 1161.6,664.8 C1163.9,664.8 1166.1,658.8 1168.4,658.8 C1169.9,658.8 1171.4,659.9 1172.9,661.7 C1174.1,663.2 1175.4,667.8 1176.6,667.8 C1178.1,667.8 1179.6,667.7 1181.1,667.5 C1182.6,667.3 1184.2,664.3 1185.7,664.3 C1187.9,664.3 1190.2,668.1 1192.4,668.1 C1194.7,668.1 1196.9,664.6 1199.2,663.6 C1202.7,662.1 1206.2,661.3 1209.7,661.3 C1211.5,661.3 1213.2,667.4 1215.0,667.4 C1217.5,667.4 1220.0,659.8 1222.5,659.8 C1223.7,659.8 1225.0,673.2 1226.2,673.2 C1229.2,673.2 1232.3,667.3 1235.3,667.3 C1236.8,667.3 1238.3,672.4 1239.8,672.4 C1240.8,672.4 1241.8,670.3 1242.8,670.3 C1244.5,670.3 1246.3,673.5 1248.0,673.5 C1249.5,673.5 1251.1,669.5 1252.6,669.5 C1253.8,669.5 1255.1,673.7 1256.3,673.7 C1258.6,673.7 1260.8,670.0 1263.1,670.0 C1265.6,670.0 1268.1,673.8 1270.6,673.8 C1271.9,673.8 1273.1,673.8 1274.4,673.7 C1277.4,673.4 1280.4,668.1 1283.4,668.1 C1285.6,668.1 1287.9,673.2 1290.1,673.2 C1292.6,673.2 1295.2,671.5 1297.7,668.1 C1299.4,665.7 1301.2,654.8 1302.9,654.8 C1304.4,654.8 1305.9,672.7 1307.4,672.7 C1308.4,672.7 1309.4,668.7 1310.4,668.2 C1311.4,667.8 1312.4,667.6 1313.4,667.6 C1314.4,667.6 1315.4,676.8 1316.4,686.0 L1316.4,686.0 Z"/>
<path fill="#b4ddf3" d="M192.0,686.0 L192.0,675.5 C193.6,675.8 195.2,676.0 196.8,676.0 C198.2,676.0 199.5,675.5 200.9,675.4 C202.5,675.2 204.0,675.1 205.6,675.1 C206.3,675.1 207.0,675.8 207.7,675.8 C208.8,675.8 210.0,675.1 211.1,675.1 C212.2,675.1 213.4,675.6 214.5,675.6 C215.9,675.6 217.2,674.8 218.6,674.8 C219.7,674.8 220.9,674.8 222.0,674.9 C223.3,674.9 224.7,675.7 226.0,675.7 C227.6,675.7 229.2,674.9 230.8,674.9 C231.9,674.9 233.1,676.0 234.2,676.0 C235.6,676.0 236.9,675.2 238.3,675.2 C240.1,675.2 241.9,675.9 243.7,675.9 C245.2,675.9 246.7,674.4 248.2,674.4 C250.1,674.4 252.0,675.1 253.9,675.1 C255.9,675.1 258.0,674.0 260.0,674.0 C261.4,674.0 262.7,674.2 264.1,674.6 C265.5,675.0 266.8,676.3 268.2,676.4 C270.2,676.6 272.3,676.6 274.3,676.6 C275.4,676.6 276.6,674.7 277.7,674.7 C279.3,674.7 280.9,674.9 282.5,675.2 C284.3,675.6 286.1,677.2 287.9,677.2 C289.3,677.2 290.6,677.1 292.0,677.1 C292.5,677.1 292.9,677.3 293.4,677.6 C294.2,678.2 295.0,686.0 295.8,686.0 C299.7,686.0 303.7,686.0 307.6,686.0 C308.7,686.0 309.9,676.4 311.0,676.4 C312.4,676.4 313.7,676.7 315.1,676.8 C316.2,676.9 317.4,677.2 318.5,677.2 C319.4,677.2 320.3,677.2 321.2,677.2 C322.3,677.2 323.5,678.0 324.6,678.0 C325.9,678.0 327.1,674.4 328.4,674.4 C329.9,674.4 331.3,675.8 332.8,678.6 C333.7,680.4 334.6,686.0 335.5,686.0 C337.3,686.0 339.2,686.0 341.0,686.0 C342.3,686.0 343.7,675.8 345.0,675.8 C346.4,675.8 347.7,675.8 349.1,675.8 C351.1,675.9 353.2,676.1 355.2,676.6 C356.3,676.8 357.5,677.7 358.6,677.7 C359.7,677.7 360.9,676.3 362.0,676.3 C364.1,676.3 366.1,678.0 368.2,678.0 C370.5,678.0 372.7,677.8 375.0,677.4 C376.1,677.2 377.3,676.7 378.4,676.7 C379.5,676.7 380.7,677.7 381.8,677.7 C382.9,677.7 384.1,675.5 385.2,675.5 C387.7,675.5 390.2,678.1 392.7,678.1 C395.0,678.1 397.2,678.1 399.5,678.0 C400.9,678.0 402.2,677.8 403.6,677.4 C405.2,677.0 406.7,675.1 408.3,675.1 C409.7,675.1 411.0,678.4 412.4,678.6 C414.2,678.9 416.0,679.1 417.8,679.1 C419.2,679.1 420.5,675.7 421.9,675.7 C423.5,675.7 425.1,677.7 426.7,677.7 C428.3,677.7 429.8,676.8 431.4,676.8 C433.2,676.8 435.1,678.6 436.9,678.6 C438.7,678.6 440.5,677.7 442.3,677.7 C444.1,677.7 446.0,678.1 447.8,678.1 C449.1,678.1 450.5,676.7 451.8,676.7 C454.3,676.7 456.8,677.9 459.3,677.9 C461.3,677.9 463.4,676.8 465.4,676.8 C466.5,676.8 467.7,677.6 468.8,677.7 C470.2,677.7 471.5,677.8 472.9,677.8 C474.9,677.8 477.0,676.0 479.0,676.0 C481.1,676.0 483.1,677.7 485.2,677.7 C486.3,677.7 487.5,676.6 488.6,676.6 C489.9,676.6 491.3,677.8 492.6,677.8 C494.2,677.8 495.8,676.9 497.4,676.9 C500.1,676.9 502.9,677.0 505.6,677.0 C506.7,677.0 507.9,676.0 509.0,676.0 C510.3,676.0 511.7,677.2 513.0,677.2 C515.1,677.2 517.1,671.4 519.2,671.4 C521.0,671.4 522.8,679.3 524.6,679.3 C526.2,679.3 527.8,678.6 529.4,678.4 C531.4,678.1 533.5,678.0 535.5,678.0 C537.1,678.0 538.6,678.2 540.2,678.2 C542.7,678.2 545.2,677.6 547.7,677.6 C549.1,677.6 550.4,677.8 551.8,677.8 C553.2,677.8 554.5,677.6 555.9,677.1 C557.0,676.7 558.2,674.3 559.3,674.1 C560.7,673.8 562.0,673.7 563.4,673.7 C564.3,673.7 565.2,677.1 566.1,677.1 C567.0,677.1 567.9,676.8 568.8,676.8 C569.9,676.8 571.1,677.0 572.2,677.0 C573.6,677.0 574.9,675.8 576.3,675.8 C577.7,675.8 579.0,677.1 580.4,677.1 C581.8,677.1 583.1,677.1 584.5,676.9 C586.1,676.7 587.6,675.9 589.2,675.9 C591.0,675.9 592.9,676.4 594.7,676.4 C595.1,676.4 595.6,675.8 596.0,675.2 C597.1,673.8 598.3,667.5 599.4,667.5 C601.5,667.5 603.5,676.5 605.6,676.5 C606.9,676.5 608.3,676.0 609.6,676.0 C610.5,676.0 611.5,676.4 612.4,676.4 C613.5,676.4 614.7,675.4 615.8,675.4 C617.4,675.4 618.9,676.5 620.5,676.5 C621.4,676.5 622.3,676.1 623.2,676.1 C624.8,676.1 626.4,676.4 628.0,676.4 C629.4,676.4 630.7,675.7 632.1,675.7 C633.2,675.7 634.4,675.8 635.5,675.8 C636.6,675.8 637.8,673.5 638.9,672.8 C640.3,671.9 641.6,671.4 643.0,671.4 C645.3,671.4 647.5,675.1 649.8,675.1 C652.1,675.1 654.3,674.6 656.6,674.6 C657.7,674.6 658.9,675.0 660.0,675.0 C661.1,675.0 662.3,674.2 663.4,674.2 C664.7,674.2 666.1,674.4 667.4,674.7 C669.2,675.2 671.1,677.7 672.9,677.7 C675.2,677.7 677.4,667.6 679.7,667.6 C681.1,667.6 682.4,678.0 683.8,678.0 C686.7,678.0 689.7,674.3 692.6,674.3 C693.7,674.3 694.9,677.7 696.0,677.7 C697.8,677.7 699.6,674.8 701.4,674.7 C704.1,674.5 706.9,674.4 709.6,674.4 C711.0,674.4 712.3,675.1 713.7,675.1 C715.7,675.1 717.8,671.0 719.8,671.0 C721.6,671.0 723.4,674.9 725.2,675.1 C726.3,675.2 727.5,675.2 728.6,675.3 C729.7,675.4 730.9,675.8 732.0,675.8 C733.6,675.8 735.2,675.7 736.8,675.6 C738.8,675.5 740.9,675.1 742.9,675.1 C745.0,675.1 747.0,675.6 749.1,675.7 C752.3,676.0 755.4,676.1 758.6,676.1 C760.2,676.1 761.8,675.4 763.4,675.4 C764.5,675.4 765.7,676.4 766.8,676.4 C767.9,676.4 769.1,675.7 770.2,675.7 C771.1,675.7 772.0,676.4 772.9,676.4 C774.3,676.4 775.6,675.1 777.0,675.1 C778.0,675.1 779.1,677.6 780.1,677.6 C781.3,677.6 782.6,676.5 783.8,676.5 C786.1,676.5 788.3,677.4 790.6,677.4 C792.6,677.4 794.7,675.8 796.7,675.8 C797.6,675.8 798.5,676.0 799.4,676.2 C800.5,676.5 801.7,677.4 802.8,677.4 C804.2,677.4 805.5,676.5 806.9,676.4 C808.9,676.2 811.0,676.3 813.0,676.1 C814.8,675.9 816.6,675.1 818.4,675.1 C819.5,675.1 820.7,675.3 821.8,675.7 C822.7,676.1 823.7,676.2 824.6,677.1 C825.0,677.6 825.5,678.7 825.9,679.6 C826.8,681.4 827.7,686.0 828.6,686.0 C829.5,686.0 830.5,683.2 831.4,681.9 C832.3,680.7 833.2,678.4 834.1,678.4 C834.8,678.4 835.4,679.8 836.1,681.0 C836.8,682.3 837.5,686.0 838.2,686.0 C838.9,686.0 839.5,686.0 840.2,686.0 C841.3,686.0 842.5,677.1 843.6,677.1 C844.7,677.1 845.9,677.9 847.0,677.9 C848.1,677.9 849.3,675.0 850.4,675.0 C851.5,675.0 852.7,677.2 853.8,677.2 C855.2,677.2 856.5,677.1 857.9,677.1 C859.3,677.1 860.6,678.0 862.0,678.0 C863.8,678.0 865.6,677.8 867.4,677.8 C869.2,677.8 871.0,678.1 872.8,678.5 C873.7,678.6 874.7,678.7 875.6,679.1 C876.7,679.6 877.9,686.0 879.0,686.0 C879.7,686.0 880.3,686.0 881.0,686.0 C881.9,686.0 882.8,676.4 883.7,676.4 C884.6,676.4 885.5,677.9 886.4,677.9 C888.0,677.9 889.6,675.1 891.2,675.1 C892.8,675.1 894.4,677.4 896.0,677.4 C898.3,677.4 900.5,676.8 902.8,675.5 C904.4,674.6 905.9,671.0 907.5,671.0 C910.2,671.0 913.0,676.5 915.7,676.5 C917.7,676.5 919.8,675.1 921.8,675.1 C922.5,675.1 923.1,675.4 923.8,675.4 C925.2,675.4 926.5,673.0 927.9,673.0 C929.3,673.0 930.6,677.4 932.0,677.4 C932.9,677.4 933.9,677.1 934.8,677.1 C936.6,677.1 938.4,678.0 940.2,678.0 C941.6,678.0 942.9,677.4 944.3,677.4 C945.4,677.4 946.6,678.0 947.7,678.0 C948.8,678.0 950.0,677.6 951.1,677.6 C953.1,677.6 955.2,678.9 957.2,678.9 C958.6,678.9 959.9,674.4 961.3,674.4 C962.9,674.4 964.4,674.9 966.0,675.0 C967.1,675.2 968.3,675.2 969.4,675.4 C970.1,675.6 970.8,677.4 971.5,677.4 C973.5,677.4 975.6,674.4 977.6,674.4 C980.1,674.4 982.6,677.3 985.1,677.6 C987.1,677.8 989.2,677.7 991.2,677.9 C993.2,678.0 995.3,678.4 997.3,678.4 C998.7,678.4 1000.0,675.8 1001.4,675.8 C1002.5,675.8 1003.7,678.4 1004.8,678.4 C1007.1,678.4 1009.3,677.8 1011.6,677.7 C1013.4,677.5 1015.2,677.6 1017.0,677.4 C1018.4,677.3 1019.7,676.6 1021.1,676.6 C1023.4,676.6 1025.6,676.5 1027.9,676.5 C1030.2,676.5 1032.4,676.8 1034.7,676.8 C1036.1,676.8 1037.4,675.8 1038.8,675.8 C1040.2,675.8 1041.5,676.1 1042.9,676.4 C1044.7,676.7 1046.5,677.6 1048.3,677.6 C1049.7,677.6 1051.0,676.8 1052.4,676.8 C1054.2,676.8 1056.0,677.1 1057.8,677.1 C1059.1,677.1 1060.3,673.7 1061.6,673.7 C1063.1,673.7 1064.5,676.1 1066.0,676.1 C1067.8,676.1 1069.6,675.7 1071.4,675.7 C1073.0,675.6 1074.6,675.6 1076.2,675.6 C1077.1,675.6 1078.0,676.6 1078.9,676.6 C1080.5,676.6 1082.1,675.8 1083.7,675.3 C1085.1,674.8 1086.4,673.7 1087.8,673.7 C1089.1,673.7 1090.5,675.9 1091.8,675.9 C1092.7,675.9 1093.7,674.5 1094.6,674.5 C1096.2,674.5 1097.7,675.8 1099.3,675.8 C1101.8,675.8 1104.3,674.4 1106.8,674.4 C1108.2,674.4 1109.5,674.8 1110.9,675.1 C1112.3,675.4 1113.6,676.1 1115.0,676.1 C1116.0,676.1 1117.0,675.5 1118.0,675.5 C1119.8,675.5 1121.5,676.0 1123.3,676.0 C1125.0,676.0 1126.8,674.1 1128.5,673.4 C1130.5,672.5 1132.5,671.2 1134.5,671.2 C1135.5,671.2 1136.5,671.4 1137.5,671.4 C1139.0,671.4 1140.6,668.8 1142.1,668.8 C1143.3,668.8 1144.6,672.9 1145.8,673.3 C1146.8,673.6 1147.8,673.4 1148.8,673.7 C1150.1,674.1 1151.3,675.6 1152.6,675.6 C1154.6,675.6 1156.6,673.8 1158.6,673.8 C1159.6,673.8 1160.6,674.5 1161.6,674.5 C1163.9,674.5 1166.1,670.8 1168.4,670.8 C1169.9,670.8 1171.4,671.6 1172.9,672.6 C1174.1,673.4 1175.4,675.9 1176.6,675.9 C1178.1,675.9 1179.6,675.9 1181.1,675.8 C1182.6,675.6 1184.2,674.2 1185.7,674.2 C1187.9,674.2 1190.2,676.0 1192.4,676.0 C1194.7,676.0 1196.9,674.3 1199.2,673.8 C1202.7,673.0 1206.2,672.6 1209.7,672.6 C1211.5,672.6 1213.2,674.9 1215.0,674.9 C1217.5,674.9 1220.0,671.9 1222.5,671.9 C1223.7,671.9 1225.0,677.9 1226.2,677.9 C1229.2,677.9 1232.3,674.1 1235.3,674.1 C1236.8,674.1 1238.3,677.4 1239.8,677.4 C1240.8,677.4 1241.8,676.5 1242.8,676.5 C1244.5,676.5 1246.3,678.1 1248.0,678.1 C1249.5,678.1 1251.1,676.3 1252.6,676.3 C1253.8,676.3 1255.1,678.2 1256.3,678.2 C1258.6,678.2 1260.8,676.8 1263.1,676.8 C1265.6,676.8 1268.1,678.3 1270.6,678.3 C1271.9,678.3 1273.1,678.2 1274.4,678.2 C1277.4,678.0 1280.4,676.4 1283.4,676.4 C1285.6,676.4 1287.9,677.9 1290.1,677.9 C1292.6,677.9 1295.2,677.1 1297.7,675.6 C1299.4,674.6 1301.2,670.3 1302.9,670.3 C1304.4,670.3 1305.9,677.5 1307.4,677.5 C1308.4,677.5 1309.4,676.8 1310.4,676.8 C1311.4,676.7 1312.4,676.7 1313.4,676.7 C1314.4,676.7 1315.4,681.4 1316.4,686.0 L1316.4,686.0 Z"/>

   <rect x="190" y="623" width="2" height="65" fill="#c5c9d6"/>
   <rect x="190" y="686" width="1130" height="2" fill="#c5c9d6"/>
  </svg>
  <div class="abs" style="left:100px;top:621px;width:87px;text-align:right;font-size:13px;font-weight:normal;-webkit-text-stroke:0.045em currentColor;color:#2b3243">4s 765ms</div>
  <div class="abs" style="left:100px;top:674px;width:87px;text-align:right;font-size:13px;font-weight:normal;-webkit-text-stroke:0.045em currentColor;color:#2b3243">0s</div>
  <div class="abs" style="left:192px;top:693px;font-size:12.9px;font-weight:normal;-webkit-text-stroke:0.045em currentColor;color:#2b3243">Sep 7 4:00 AM</div>
  <div class="abs" style="left:1120px;top:693px;width:200px;text-align:right;font-size:12.9px;font-weight:normal;-webkit-text-stroke:0.045em currentColor;color:#2b3243">Sep 21 5:00 AM</div>
  <div class="abs" style="left:560px;top:708px;width:12px;height:12px;background:#4b7fb0;border-radius:2px"></div>
  <div class="abs" style="left:580px;top:706px;font-size:12.8px;color:#3a4357">Backend</div>
  <div class="abs" style="left:658px;top:708px;width:12px;height:12px;background:#86b9e2;border-radius:2px"></div>
  <div class="abs" style="left:678px;top:706px;font-size:12.8px;color:#3a4357">Device &amp; App network</div>
  <div class="abs" style="left:833px;top:708px;width:12px;height:12px;background:#b4ddf3;border-radius:2px"></div>
  <div class="abs" style="left:853px;top:706px;font-size:12.8px;color:#3a4357">Client</div>
 </div>
</div>

<!-- right panel -->
<div class="abs" style="left:1358px;top:150px;width:41px;height:610px;background:#fff;border:1px solid #e3e4f0;border-radius:6px 0 0 0"></div>
<svg class="abs" style="left:1359px;top:150px" width="38" height="200" viewBox="1359 150 38 200">
 <g fill="none" stroke="#4b5573" stroke-width="1.2" stroke-linecap="round">
  <ellipse cx="1379.6" cy="214.6" rx="5.6" ry="7.2" stroke-dasharray="9 1.2 14 1.2"/>
  <ellipse cx="1379.6" cy="214.6" rx="3.2" ry="4.6" stroke-dasharray="6 1 9 1"/>
  <path d="M1379.6,212.5 V217.5"/>
  <path d="M1376.3,265.2 A4.2,4.2 0 1 1 1382.7,265.2 L1382,267 H1377 Z M1377.6,269 H1381.4"/>
  <path d="M1373,259.5 L1374.3,260.3 M1386,259.5 L1384.7,260.3 M1379.5,255.5 V257 M1375.5,256.5 L1376.3,257.7 M1383.5,256.5 L1382.7,257.7"/>
  <circle cx="1379.7" cy="321" r="7.5"/>
  <path d="M1377.3,318.6 A2.4,2.4 0 1 1 1380.5,320.9 C1379.8,321.3 1379.7,322 1379.7,323"/>
 </g>
 <circle cx="1379.7" cy="325.6" r="0.8" fill="#4b5573"/>
 <rect x="1373.8" y="277" width="11" height="14.5" rx="4" fill="#4b5573"/>
 <text x="1379.3" y="288.2" text-anchor="middle" font-size="11" fill="#fff" font-family="Liberation Sans">0</text>
</svg>
<!-- scrollbar -->
<div class="abs" style="left:1345px;top:135px;width:7px;height:120px;background:#c1c4cf;border-radius:3.5px"></div>
<div class="abs" style="left:63px;top:746px;width:1260px;height:8px;background:#c1c4cf;border-radius:4px"></div>
<!-- help -->
<div class="abs" style="left:1327px;top:728px;width:75px;height:30px;background:#272d3a;border-radius:6px 0 0 0;color:#fff;font-weight:normal;-webkit-text-stroke:0.034em currentColor;font-size:14px;padding-left:31px;line-height:28px">Help
 <svg width="16" height="16" viewBox="0 0 16 16" style="position:absolute;left:10px;top:6px"><g fill="none" stroke="#fff" stroke-width="1.3"><circle cx="8" cy="8" r="6.5"/><circle cx="8" cy="8" r="3"/><path d="M3.4,3.4 L5.9,5.9 M12.6,3.4 L10.1,5.9 M3.4,12.6 L5.9,10.1 M12.6,12.6 L10.1,10.1"/></g></svg>
</div>
</div></body></html>
